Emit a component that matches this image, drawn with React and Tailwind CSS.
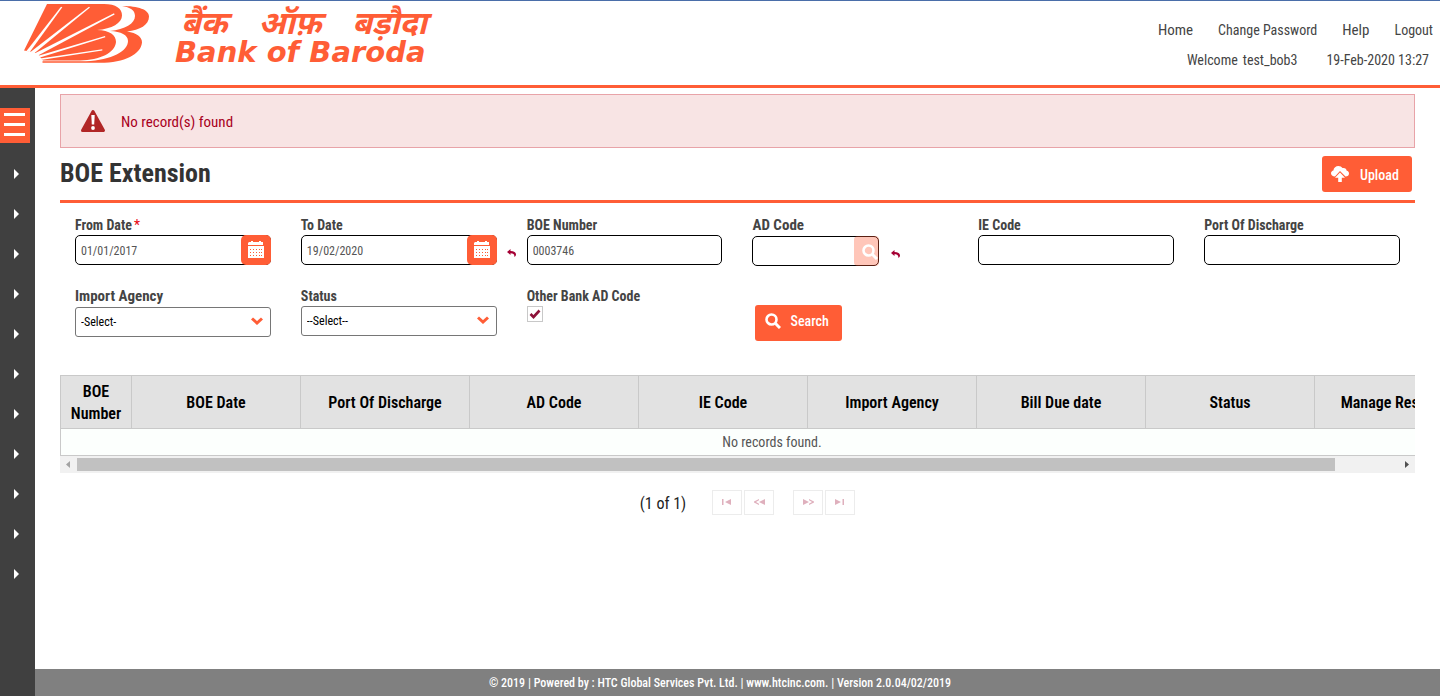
import React from "react";

const BRAND = "#ff5d36";

function LogoMark() {
  return (
    <svg viewBox="0 0 126 60" className="h-[60px] w-[126px]" aria-hidden="true">
      <path
        fill={BRAND}
        d="M23 0H80C92 0 98 4.500 98 11.500C98 19 88 25 73 26C86 26.500 92 31 92 38C91 49 76 56 56 56.500H19L16 53L14 50L10 48.500L6 47.500L0 46.500Z"
      />
      <path
        fill={BRAND}
        d="M98 2C114 2 125 5.500 125 12.500C125 21 116 26 103 27.500C113 29 118 33 118 38.500C117 50 101 58.800 76 58.800H18.500V57.300H62C88 56 104 47 104 37C104 31 97 27.500 86 27C101 25.500 111 19.500 111 12C111 6 106 3.500 98 2Z"
      />
      <g fill="#fff">
        <path d="M2.500 47L37 2.800L38.300 3.300L5.800 48Z" />
        <path d="M6.500 48L65 2.800L66 3.600L10 49.500Z" />
        <path d="M10.500 49.500L90 9.300L90.600 10.500L14 51.500Z" />
        <path d="M13.500 52L81 32L81.300 33.200L16 53.500Z" />
        <path d="M16 54.500L78.300 45.200V46.400L18.500 55.800Z" />
      </g>
    </svg>
  );
}

function CalendarIcon() {
  return (
    <svg viewBox="0 0 16 17" className="mb-0.5 h-[17px] w-4" aria-hidden="true">
      <path fill="#fff" d="M1 1H3V0H5V1H11V0H13V1H15V4H16H0V2Z M0 5H16V17H0Z" />
      <g fill={BRAND}>
        {[8, 11, 14].map((y) =>
          [2, 5, 8, 11, 13].map((x) => <rect key={x + "-" + y} x={x} y={y} width="1" height="1" />)
        )}
      </g>
    </svg>
  );
}

function SearchIcon() {
  return (
    <svg viewBox="0 0 16 16" className="size-4 shrink-0" fill="none" stroke="#fff" aria-hidden="true">
      <circle cx="6.500" cy="6.500" r="5" strokeWidth="2.600" />
      <path d="M10.500 10.500L15 15" strokeWidth="3" />
    </svg>
  );
}

function UploadIcon() {
  return (
    <svg viewBox="0 0 18 16" className="h-4 w-[18px]" aria-hidden="true">
      <path
        fill="#fff"
        d="M4 10.500C1.500 10.500 0 9 0 7.200C0 5.600 1.200 4.700 2.400 4.400C2.700 1.800 5 0 7.300 0C9.300 0 10.600 .8 11.500 2C14 1.500 15.500 3 15.700 4.700C17.200 5 18 6.100 18 7.500C18 9.200 16.700 10.500 14.500 10.500L9 5Z"
      />
      <path fill="#fff" d="M9 6.500L14 11.700H10.800V16H7.200V11.700H4Z" />
    </svg>
  );
}

function UndoButton({ label }) {
  return (
    <button type="button" aria-label={label} className="block shrink-0">
      <svg viewBox="0 0 9 8" className="block h-2 w-[9px]" aria-hidden="true">
        <path fill="#a50034" d="M0 3L3.500 0V2C7 2 9 3.500 9 5.500C9 6.700 8.300 7.500 7.300 8C7.700 5.500 6.500 4.200 3.500 4.200V6Z" />
      </svg>
    </button>
  );
}

function Field({ id, label, required, large, children }) {
  return (
    <div className="flex flex-col px-[15px]">
      <label
        htmlFor={id}
        className={
          (large ? "text-[15px] leading-[21px]" : "text-sm leading-5") +
          " font-bold whitespace-nowrap text-[#444]"
        }
      >
        {label}
        {required && <span className="ml-0.5 font-normal text-red-600">*</span>}
      </label>
      {children}
    </div>
  );
}

const INPUT =
  "h-[30px] w-full min-w-0 rounded-[5px] border border-black bg-white px-[5px] pt-0.5 text-xs text-[#555] outline-none";

function DateField({ id, label, required, value, undo }) {
  return (
    <Field id={id} label={label} required={required}>
      <div className="relative">
        <input id={id} className={INPUT} defaultValue={value} />
        <button
          type="button"
          aria-label={"Pick " + label}
          className="absolute top-0 right-0 flex h-[30px] w-[30px] items-center justify-center rounded-[5px] bg-[#ff5d36]"
        >
          <CalendarIcon />
        </button>
        {undo && (
          <span className="absolute top-[14px] -right-[19px]">
            <UndoButton label={"Reset " + label} />
          </span>
        )}
      </div>
    </Field>
  );
}

function SelectField({ id, label, option, large }) {
  return (
    <Field id={id} label={label} large={large}>
      <div className="relative">
        <select
          id={id}
          className="h-[30px] w-full appearance-none rounded-[3px] border border-[#767676] bg-white px-[5px] text-xs text-black"
        >
          <option>{option}</option>
        </select>
        <svg viewBox="0 0 12 8" className="pointer-events-none absolute top-[10px] right-2 h-2 w-3" aria-hidden="true">
          <path d="M1 1.500L6 6L11 1.500" fill="none" stroke={BRAND} strokeWidth="3" />
        </svg>
      </div>
    </Field>
  );
}

const COLUMNS = [
  "BOE Date",
  "Port Of Discharge",
  "AD Code",
  "IE Code",
  "Import Agency",
  "Bill Due date",
  "Status",
  "Manage Response",
];

const PAGER = [
  { label: "First page", d: "M0 0H1.500V6H0Z M9 0V6L3 3Z" },
  { label: "Previous page", d: "M5 0V1.300L2 3L5 4.700V6L0 3.500V2.500Z M11 0V6L5 3Z" },
  { label: "Next page", d: "M0 0V6L6 3Z M6 0V1.300L9 3L6 4.700V6L11 3.500V2.500Z" },
  { label: "Last page", d: "M0 0V6L6 3Z M7.500 0H9V6H7.500Z" },
];

function PagerButton({ item }) {
  return (
    <button
      type="button"
      disabled
      aria-label={item.label}
      className="flex h-[25px] w-[30px] items-center justify-center border border-[#ececec] pb-0.5"
    >
      <svg viewBox="0 0 11 6" className="h-1.5 w-[11px]" aria-hidden="true">
        <path fill="#dfb0bd" d={item.d} />
      </svg>
    </button>
  );
}

export default function App() {
  return (
    <div className="flex min-h-screen flex-col bg-white font-['Roboto_Condensed','Liberation_Sans_Narrow',Roboto,sans-serif] text-[#444]">
      <header className="flex h-[88px] items-start justify-between border-t border-b-[3px] border-t-[#4a6ea9] border-b-[#ff5d36] pl-6">
        <a href="#home" className="flex gap-[25px] pt-[3px] text-[#ff5d36]">
          <LogoMark />
          <span className="flex w-[256px] flex-col">
            <span className="flex justify-between pt-1.5 pr-1 pl-1.5 font-['Noto_Sans_Devanagari','Noto_Sans',sans-serif] text-[32px] leading-8 font-bold italic whitespace-nowrap">
              <span>बैंक</span> <span>ऑफ़</span> <span>बड़ौदा</span>
            </span>
            <span className="font-['DejaVu_Sans',sans-serif] text-[29px] leading-5 font-bold italic whitespace-nowrap">
              Bank of Baroda
            </span>
          </span>
        </a>
        <div className="flex flex-col gap-2.5 pt-[19px] text-sm leading-5 whitespace-nowrap">
          <nav className="flex justify-end gap-[25px] pr-[7px]">
            <a href="#home" className="text-[15px]">Home</a>
            <a href="#password">Change Password</a>
            <a href="#help" className="text-[15px]">Help</a>
            <a href="#logout">Logout</a>
          </nav>
          <div className="flex justify-end pr-[11px]">
            <span className="mr-[5px]">Welcome</span>
            <span className="mr-[29px]">test_bob3</span>
            <span>19-Feb-2020 13:27</span>
          </div>
        </div>
      </header>

      <div className="flex grow">
        <aside className="w-[35px] shrink-0 bg-[#404040] pt-5">
          <button
            type="button"
            aria-label="Menu"
            className="flex h-[35px] w-[30px] flex-col items-center justify-center gap-[7px] bg-[#ff5d36] pr-0.5 pb-0.5"
          >
            <span className="h-[3px] w-[21px] bg-white" />
            <span className="h-[3px] w-[21px] bg-white" />
            <span className="h-[3px] w-[21px] bg-white" />
          </button>
          <nav className="flex flex-col pt-[11px]">
            {Array.from({ length: 11 }, (_, i) => (
              <button key={i} type="button" aria-label={"Menu item " + (i + 1)} className="flex h-10 items-center pl-[14px]">
                <svg viewBox="0 0 5 10" className="h-2.5 w-[5px]" aria-hidden="true">
                  <path d="M0 0L5 5L0 10Z" fill="#fff" />
                </svg>
              </button>
            ))}
          </nav>
        </aside>

        <div className="flex min-w-0 grow flex-col">
          <main className="grow px-[25px] pt-1.5">
            <div className="flex h-[54px] items-center border border-[#e8a3a8] bg-[#f8e4e4] pl-[19px] text-[15px] text-[#a8001c]">
              <svg viewBox="0 0 26 24" className="mr-[15px] h-6 w-[26px]" aria-hidden="true">
                <path d="M13 2.500L23.500 21.500H2.500Z" fill="#b12626" stroke="#b12626" strokeWidth="3" strokeLinejoin="round" />
                <path d="M11.300 6H14.700L14.200 15.500H11.800Z" fill="#fff" />
                <circle cx="13" cy="19" r="1.900" fill="#fff" />
              </svg>
              <span className="pt-0.5">No record(s) found</span>
            </div>

            <div className="flex items-start justify-between border-b-[3px] border-[#ff5d36] pt-2 pr-[3px] pb-2">
              <h1 className="text-[26px] leading-[34px] font-bold text-[#333]">BOE Extension</h1>
              <button
                type="button"
                className="flex h-9 w-[90px] items-center gap-[11px] rounded-[3px] bg-[#ff5d36] pl-[9px] text-sm font-medium text-white"
              >
                <UploadIcon />
                <span className="pt-0.5">Upload</span>
              </button>
            </div>

            <form className="grid grid-cols-6 gap-y-5 pt-3" onSubmit={(e) => e.preventDefault()}>
              <DateField id="from" label="From Date" required value="01/01/2017" />
              <DateField id="to" label="To Date" value="19/02/2020" undo />
              <Field id="boe" label="BOE Number">
                <input id="boe" className={INPUT} defaultValue="0003746" />
              </Field>
              <Field id="ad" label="AD Code" large>
                <div className="flex items-center gap-3">
                  <div className="relative w-[127px]">
                    <input id="ad" className={INPUT} />
                    <button
                      type="button"
                      disabled
                      aria-label="Find AD code"
                      className="absolute top-0 right-0 flex h-[30px] w-[25px] items-center justify-end rounded-[4px] bg-[#ff5d36] opacity-35"
                    />
                    <span className="pointer-events-none absolute top-2 right-px">
                      <SearchIcon />
                    </span>
                  </div>
                  <span className="pt-1.5">
                    <UndoButton label="Reset AD Code" />
                  </span>
                </div>
              </Field>
              <Field id="ie" label="IE Code">
                <input id="ie" className={INPUT} />
              </Field>
              <Field id="port" label="Port Of Discharge">
                <input id="port" className={INPUT} />
              </Field>

              <SelectField id="agency" label="Import Agency" option="-Select-" large />
              <SelectField id="status" label="Status" option="--Select--" />
              <Field id="other" label="Other Bank AD Code">
                <span className="relative size-4">
                  <input
                    id="other"
                    type="checkbox"
                    defaultChecked
                    className="peer block size-4 appearance-none border border-[#c8c8c8] bg-white"
                  />
                  <svg
                    viewBox="0 0 12 10"
                    className="pointer-events-none absolute top-[3px] left-0.5 hidden h-2.5 w-3 peer-checked:block"
                    aria-hidden="true"
                  >
                    <path d="M1.500 5L4.500 8L10.500 1.500" fill="none" stroke="#8e1239" strokeWidth="2.600" />
                  </svg>
                </span>
              </Field>
              <div className="pt-[19px] pl-[18px]">
                <button
                  type="submit"
                  className="flex h-9 w-[87px] items-center gap-[9px] rounded-[3px] bg-[#ff5d36] pb-1 pl-2.5 text-sm font-medium text-white"
                >
                  <SearchIcon />
                  Search
                </button>
              </div>
            </form>

            <div className="mt-[34px] overflow-x-auto [scrollbar-width:none]">
              <table className="w-[1423px] table-fixed border-collapse">
                <colgroup>
                  <col className="w-[71px]" />
                  {COLUMNS.map((c) => (
                    <col key={c} className="w-[169px]" />
                  ))}
                </colgroup>
                <thead>
                  <tr className="h-[53px] bg-[#e2e2e2] text-base leading-[22px] text-black">
                    <th className="border border-[#c9c9c9] px-0 pt-0.5 font-semibold">BOE Number</th>
                    {COLUMNS.map((c) => (
                      <th key={c} className="border border-[#c9c9c9] px-0 pt-0.5 font-semibold whitespace-nowrap">
                        {c}
                      </th>
                    ))}
                  </tr>
                </thead>
                <tbody>
                  <tr className="h-[27px] bg-[#fcfffd]">
                    <td colSpan={9} className="border border-[#c9c9c9] text-center text-sm leading-5 text-[#555]">
                      No records found.
                    </td>
                  </tr>
                </tbody>
              </table>
            </div>
            <div className="flex h-[17px] items-center bg-[#f1f1f1]" aria-hidden="true">
              <svg viewBox="0 0 17 17" className="size-[17px] shrink-0">
                <path d="M10 5V12L6 8.500Z" fill="#a3a3a3" />
              </svg>
              <div className="h-[13px] grow">
                <div className="h-full w-[95.2%] bg-[#c1c1c1]" />
              </div>
              <svg viewBox="0 0 17 17" className="size-[17px] shrink-0">
                <path d="M7 5V12L11 8.500Z" fill="#505050" />
              </svg>
            </div>

            <div className="flex items-center justify-center gap-0.5 pt-[17px] pl-5">
              <span className="mr-6 pt-0.5 text-base leading-5 text-[#222]">(1 of 1)</span>
              <PagerButton item={PAGER[0]} />
              <PagerButton item={PAGER[1]} />
              <span className="w-[15px]" />
              <PagerButton item={PAGER[2]} />
              <PagerButton item={PAGER[3]} />
            </div>
          </main>

          <footer className="flex h-[27px] items-center justify-center bg-[#808080] pr-[35px] text-xs font-medium whitespace-nowrap text-white">
            © 2019 | Powered by : HTC Global Services Pvt. Ltd. | www.htcinc.com. | Version 2.0.04/02/2019
          </footer>
        </div>
      </div>
    </div>
  );
}
